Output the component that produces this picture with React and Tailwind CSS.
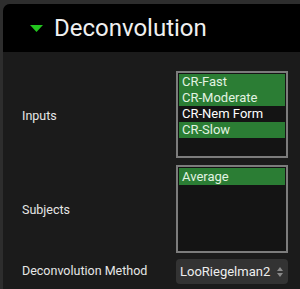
export default function App() {
  const inputs = [
    { name: 'CR-Fast', on: true },
    { name: 'CR-Moderate', on: true },
    { name: 'CR-Nem Form', on: false },
    { name: 'CR-Slow', on: true },
  ]

  return (
    <div className="w-[300px] h-[289px] overflow-hidden bg-[#2d2d2d] pt-[4px] pl-[3px] font-['Roboto',sans-serif]">
      <div className="h-full rounded-tl-[7px] overflow-hidden bg-[#1b1b1b]">
        <div className="h-[48px] bg-black flex items-center pl-[27px]">
          <svg width="13" height="7" viewBox="0 0 13 7" className="mr-[11px] mt-[1px]">
            <polygon points="0,0 13,0 6.5,7" fill="#22c51e" />
          </svg>
          <span className="text-[24px] text-[#f0f0f0] leading-none">Deconvolution</span>
        </div>

        <div className="pl-[19px] pr-[9px] pt-[19px]">
          <div className="flex items-center">
            <div className="w-[154px] pt-[3px] text-[12.5px] text-[#e6e6e6]">Inputs</div>
            <div className="w-[112px] h-[87px] border-2 border-[#7c7c7c] bg-[#141414] p-px">
              {inputs.map((o) => (
                <div
                  key={o.name}
                  className={
                    'h-[16px] pl-[3px] text-[13px] leading-[16px] ' +
                    (o.on ? 'bg-[#2b7d34] text-[#e2f3e2]' : 'text-white')
                  }
                >
                  {o.name}
                </div>
              ))}
            </div>
          </div>

          <div className="flex items-center mt-[7px]">
            <div className="w-[154px] pt-[3px] text-[12.5px] text-[#e6e6e6]">Subjects</div>
            <div className="w-[112px] h-[88px] border-2 border-[#7c7c7c] bg-[#141414] p-px">
              <div className="h-[17px] pl-[3px] text-[13px] leading-[17px] bg-[#2b7d34] text-[#e2f3e2]">Average</div>
            </div>
          </div>

          <div className="flex items-center mt-[6px]">
            <div className="w-[154px] text-[12.5px] text-[#e6e6e6]">Deconvolution Method</div>
            <div className="w-[112px] h-[25px] rounded-[4px] bg-[#333333] flex items-center justify-between pl-[4px] pr-[5px]">
              <span className="text-[13px] text-[#eeeeee]">LooRiegelman2</span>
              <svg width="6" height="10" viewBox="0 0 6 10">
                <polygon points="0,4 6,4 3,0" fill="#8a8a8a" />
                <polygon points="0,6 6,6 3,10" fill="#8a8a8a" />
              </svg>
            </div>
          </div>
        </div>
      </div>
    </div>
  )
}
